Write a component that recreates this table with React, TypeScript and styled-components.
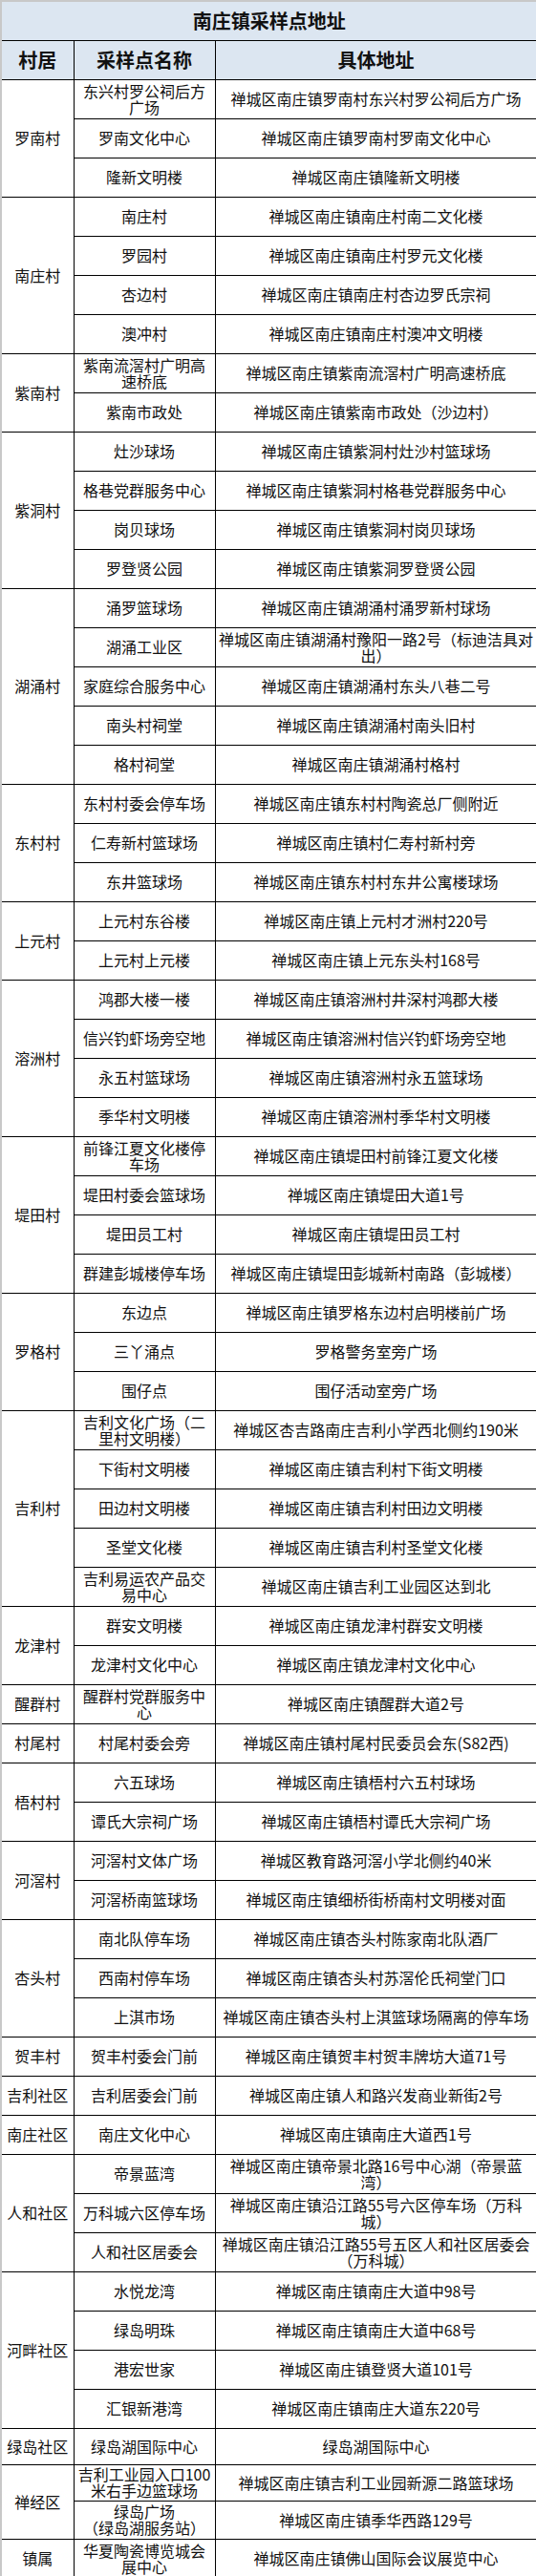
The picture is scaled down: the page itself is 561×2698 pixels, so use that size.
import React from 'react';
import styled, { createGlobalStyle } from 'styled-components';

const GlobalStyle = createGlobalStyle`
  body {
    margin: 0;
    background: #fff;
  }
`;

const Sheet = styled.table`
  border-collapse: collapse;
  table-layout: fixed;
  width: 561px;
  font-family: "Noto Sans CJK SC", "Noto Sans", sans-serif;
  color: #111;
`;

const Row = styled.tr<{ $h: number }>`
  height: ${(p) => p.$h}px;
`;

const TitleCell = styled.th`
  background: #dce6f1;
  font-size: 20px;
  font-weight: 700;
  border: 1px solid #000;
  border-top: 2px solid #c8c8c8;
  border-left: 2px solid #c8c8c8;
  padding: 0;
`;

const HeadCell = styled.th<{ $first?: boolean }>`
  background: #dce6f1;
  font-size: 20px;
  font-weight: 700;
  border: 1px solid #000;
  border-left: ${(p) => (p.$first ? '2px solid #c8c8c8' : '1px solid #000')};
  padding: 0;
`;

const VillageCell = styled.td`
  border: 1px solid #000;
  border-left: 2px solid #c8c8c8;
  font-size: 16px;
  line-height: 17px;
  text-align: center;
  vertical-align: middle;
  padding: 0;
  white-space: pre;
`;

const Cell = styled.td`
  border: 1px solid #000;
  font-size: 16px;
  line-height: 17px;
  text-align: center;
  vertical-align: middle;
  padding: 0 1px;
  white-space: pre;
`;

type Site = [string, string, number?];

const groups: { village: string; sites: Site[] }[] = [
  {
    village: '罗南村',
    sites: [
      ['东兴村罗公祠后方\n广场', '禅城区南庄镇罗南村东兴村罗公祠后方广场'],
      ['罗南文化中心', '禅城区南庄镇罗南村罗南文化中心'],
      ['隆新文明楼', '禅城区南庄镇隆新文明楼'],
    ],
  },
  {
    village: '南庄村',
    sites: [
      ['南庄村', '禅城区南庄镇南庄村南二文化楼'],
      ['罗园村', '禅城区南庄镇南庄村罗元文化楼'],
      ['杏边村', '禅城区南庄镇南庄村杏边罗氏宗祠'],
      ['澳冲村', '禅城区南庄镇南庄村澳冲文明楼'],
    ],
  },
  {
    village: '紫南村',
    sites: [
      ['紫南流滘村广明高\n速桥底', '禅城区南庄镇紫南流滘村广明高速桥底'],
      ['紫南市政处', '禅城区南庄镇紫南市政处（沙边村）'],
    ],
  },
  {
    village: '紫洞村',
    sites: [
      ['灶沙球场', '禅城区南庄镇紫洞村灶沙村篮球场'],
      ['格巷党群服务中心', '禅城区南庄镇紫洞村格巷党群服务中心'],
      ['岗贝球场', '禅城区南庄镇紫洞村岗贝球场'],
      ['罗登贤公园', '禅城区南庄镇紫洞罗登贤公园'],
    ],
  },
  {
    village: '湖涌村',
    sites: [
      ['涌罗篮球场', '禅城区南庄镇湖涌村涌罗新村球场'],
      ['湖涌工业区', '禅城区南庄镇湖涌村豫阳一路2号（标迪洁具对\n出）'],
      ['家庭综合服务中心', '禅城区南庄镇湖涌村东头八巷二号'],
      ['南头村祠堂', '禅城区南庄镇湖涌村南头旧村'],
      ['格村祠堂', '禅城区南庄镇湖涌村格村'],
    ],
  },
  {
    village: '东村村',
    sites: [
      ['东村村委会停车场', '禅城区南庄镇东村村陶瓷总厂侧附近'],
      ['仁寿新村篮球场', '禅城区南庄镇村仁寿村新村旁'],
      ['东井篮球场', '禅城区南庄镇东村村东井公寓楼球场'],
    ],
  },
  {
    village: '上元村',
    sites: [
      ['上元村东谷楼', '禅城区南庄镇上元村才洲村220号'],
      ['上元村上元楼', '禅城区南庄镇上元东头村168号'],
    ],
  },
  {
    village: '溶洲村',
    sites: [
      ['鸿郡大楼一楼', '禅城区南庄镇溶洲村井深村鸿郡大楼'],
      ['信兴钓虾场旁空地', '禅城区南庄镇溶洲村信兴钓虾场旁空地'],
      ['永五村篮球场', '禅城区南庄镇溶洲村永五篮球场'],
      ['季华村文明楼', '禅城区南庄镇溶洲村季华村文明楼'],
    ],
  },
  {
    village: '堤田村',
    sites: [
      ['前锋江夏文化楼停\n车场', '禅城区南庄镇堤田村前锋江夏文化楼'],
      ['堤田村委会篮球场', '禅城区南庄镇堤田大道1号'],
      ['堤田员工村', '禅城区南庄镇堤田员工村'],
      ['群建彭城楼停车场', '禅城区南庄镇堤田彭城新村南路（彭城楼）'],
    ],
  },
  {
    village: '罗格村',
    sites: [
      ['东边点', '禅城区南庄镇罗格东边村启明楼前广场'],
      ['三丫涌点', '罗格警务室旁广场'],
      ['围仔点', '围仔活动室旁广场'],
    ],
  },
  {
    village: '吉利村',
    sites: [
      ['吉利文化广场（二\n里村文明楼）', '禅城区杏吉路南庄吉利小学西北侧约190米'],
      ['下街村文明楼', '禅城区南庄镇吉利村下街文明楼'],
      ['田边村文明楼', '禅城区南庄镇吉利村田边文明楼'],
      ['圣堂文化楼', '禅城区南庄镇吉利村圣堂文化楼'],
      ['吉利易运农产品交\n易中心', '禅城区南庄镇吉利工业园区达到北'],
    ],
  },
  {
    village: '龙津村',
    sites: [
      ['群安文明楼', '禅城区南庄镇龙津村群安文明楼'],
      ['龙津村文化中心', '禅城区南庄镇龙津村文化中心'],
    ],
  },
  {
    village: '醒群村',
    sites: [['醒群村党群服务中\n心', '禅城区南庄镇醒群大道2号']],
  },
  {
    village: '村尾村',
    sites: [['村尾村委会旁', '禅城区南庄镇村尾村民委员会东(S82西)']],
  },
  {
    village: '梧村村',
    sites: [
      ['六五球场', '禅城区南庄镇梧村六五村球场'],
      ['谭氏大宗祠广场', '禅城区南庄镇梧村谭氏大宗祠广场'],
    ],
  },
  {
    village: '河滘村',
    sites: [
      ['河滘村文体广场', '禅城区教育路河滘小学北侧约40米'],
      ['河滘桥南篮球场', '禅城区南庄镇细桥街桥南村文明楼对面'],
    ],
  },
  {
    village: '杏头村',
    sites: [
      ['南北队停车场', '禅城区南庄镇杏头村陈家南北队酒厂'],
      ['西南村停车场', '禅城区南庄镇杏头村苏滘伦氏祠堂门口'],
      ['上淇市场', '禅城区南庄镇杏头村上淇篮球场隔离的停车场'],
    ],
  },
  {
    village: '贺丰村',
    sites: [['贺丰村委会门前', '禅城区南庄镇贺丰村贺丰牌坊大道71号']],
  },
  {
    village: '吉利社区',
    sites: [['吉利居委会门前', '禅城区南庄镇人和路兴发商业新街2号']],
  },
  {
    village: '南庄社区',
    sites: [['南庄文化中心', '禅城区南庄镇南庄大道西1号']],
  },
  {
    village: '人和社区',
    sites: [
      ['帝景蓝湾', '禅城区南庄镇帝景北路16号中心湖（帝景蓝\n湾）'],
      ['万科城六区停车场', '禅城区南庄镇沿江路55号六区停车场（万科\n城）'],
      ['人和社区居委会', '禅城区南庄镇沿江路55号五区人和社区居委会\n（万科城）'],
    ],
  },
  {
    village: '河畔社区',
    sites: [
      ['水悦龙湾', '禅城区南庄镇南庄大道中98号'],
      ['绿岛明珠', '禅城区南庄镇南庄大道中68号'],
      ['港宏世家', '禅城区南庄镇登贤大道101号'],
      ['汇银新港湾', '禅城区南庄镇南庄大道东220号'],
    ],
  },
  {
    village: '绿岛社区',
    sites: [['绿岛湖国际中心', '绿岛湖国际中心', 38]],
  },
  {
    village: '禅经区',
    sites: [
      ['吉利工业园入口100\n米右手边篮球场', '禅城区南庄镇吉利工业园新源二路篮球场', 38],
      ['绿岛广场\n（绿岛湖服务站）', '禅城区南庄镇季华西路129号', 40],
    ],
  },
  {
    village: '镇属',
    sites: [['华夏陶瓷博览城会\n展中心', '禅城区南庄镇佛山国际会议展览中心']],
  },
];

export default function App() {
  return (
    <>
      <GlobalStyle />
      <Sheet>
        <colgroup>
          <col style={{ width: 76 }} />
          <col style={{ width: 148 }} />
          <col style={{ width: 337 }} />
        </colgroup>
        <thead>
          <Row $h={41}>
            <TitleCell colSpan={3}>南庄镇采样点地址</TitleCell>
          </Row>
          <Row $h={41}>
            <HeadCell $first>村居</HeadCell>
            <HeadCell>采样点名称</HeadCell>
            <HeadCell>具体地址</HeadCell>
          </Row>
        </thead>
        <tbody>
          {groups.flatMap((g) =>
            g.sites.map((s, i) => (
              <Row key={g.village + s[0]} $h={s[2] ?? 41}>
                {i === 0 && <VillageCell rowSpan={g.sites.length}>{g.village}</VillageCell>}
                <Cell>{s[0]}</Cell>
                <Cell>{s[1]}</Cell>
              </Row>
            ))
          )}
        </tbody>
      </Sheet>
    </>
  );
}
